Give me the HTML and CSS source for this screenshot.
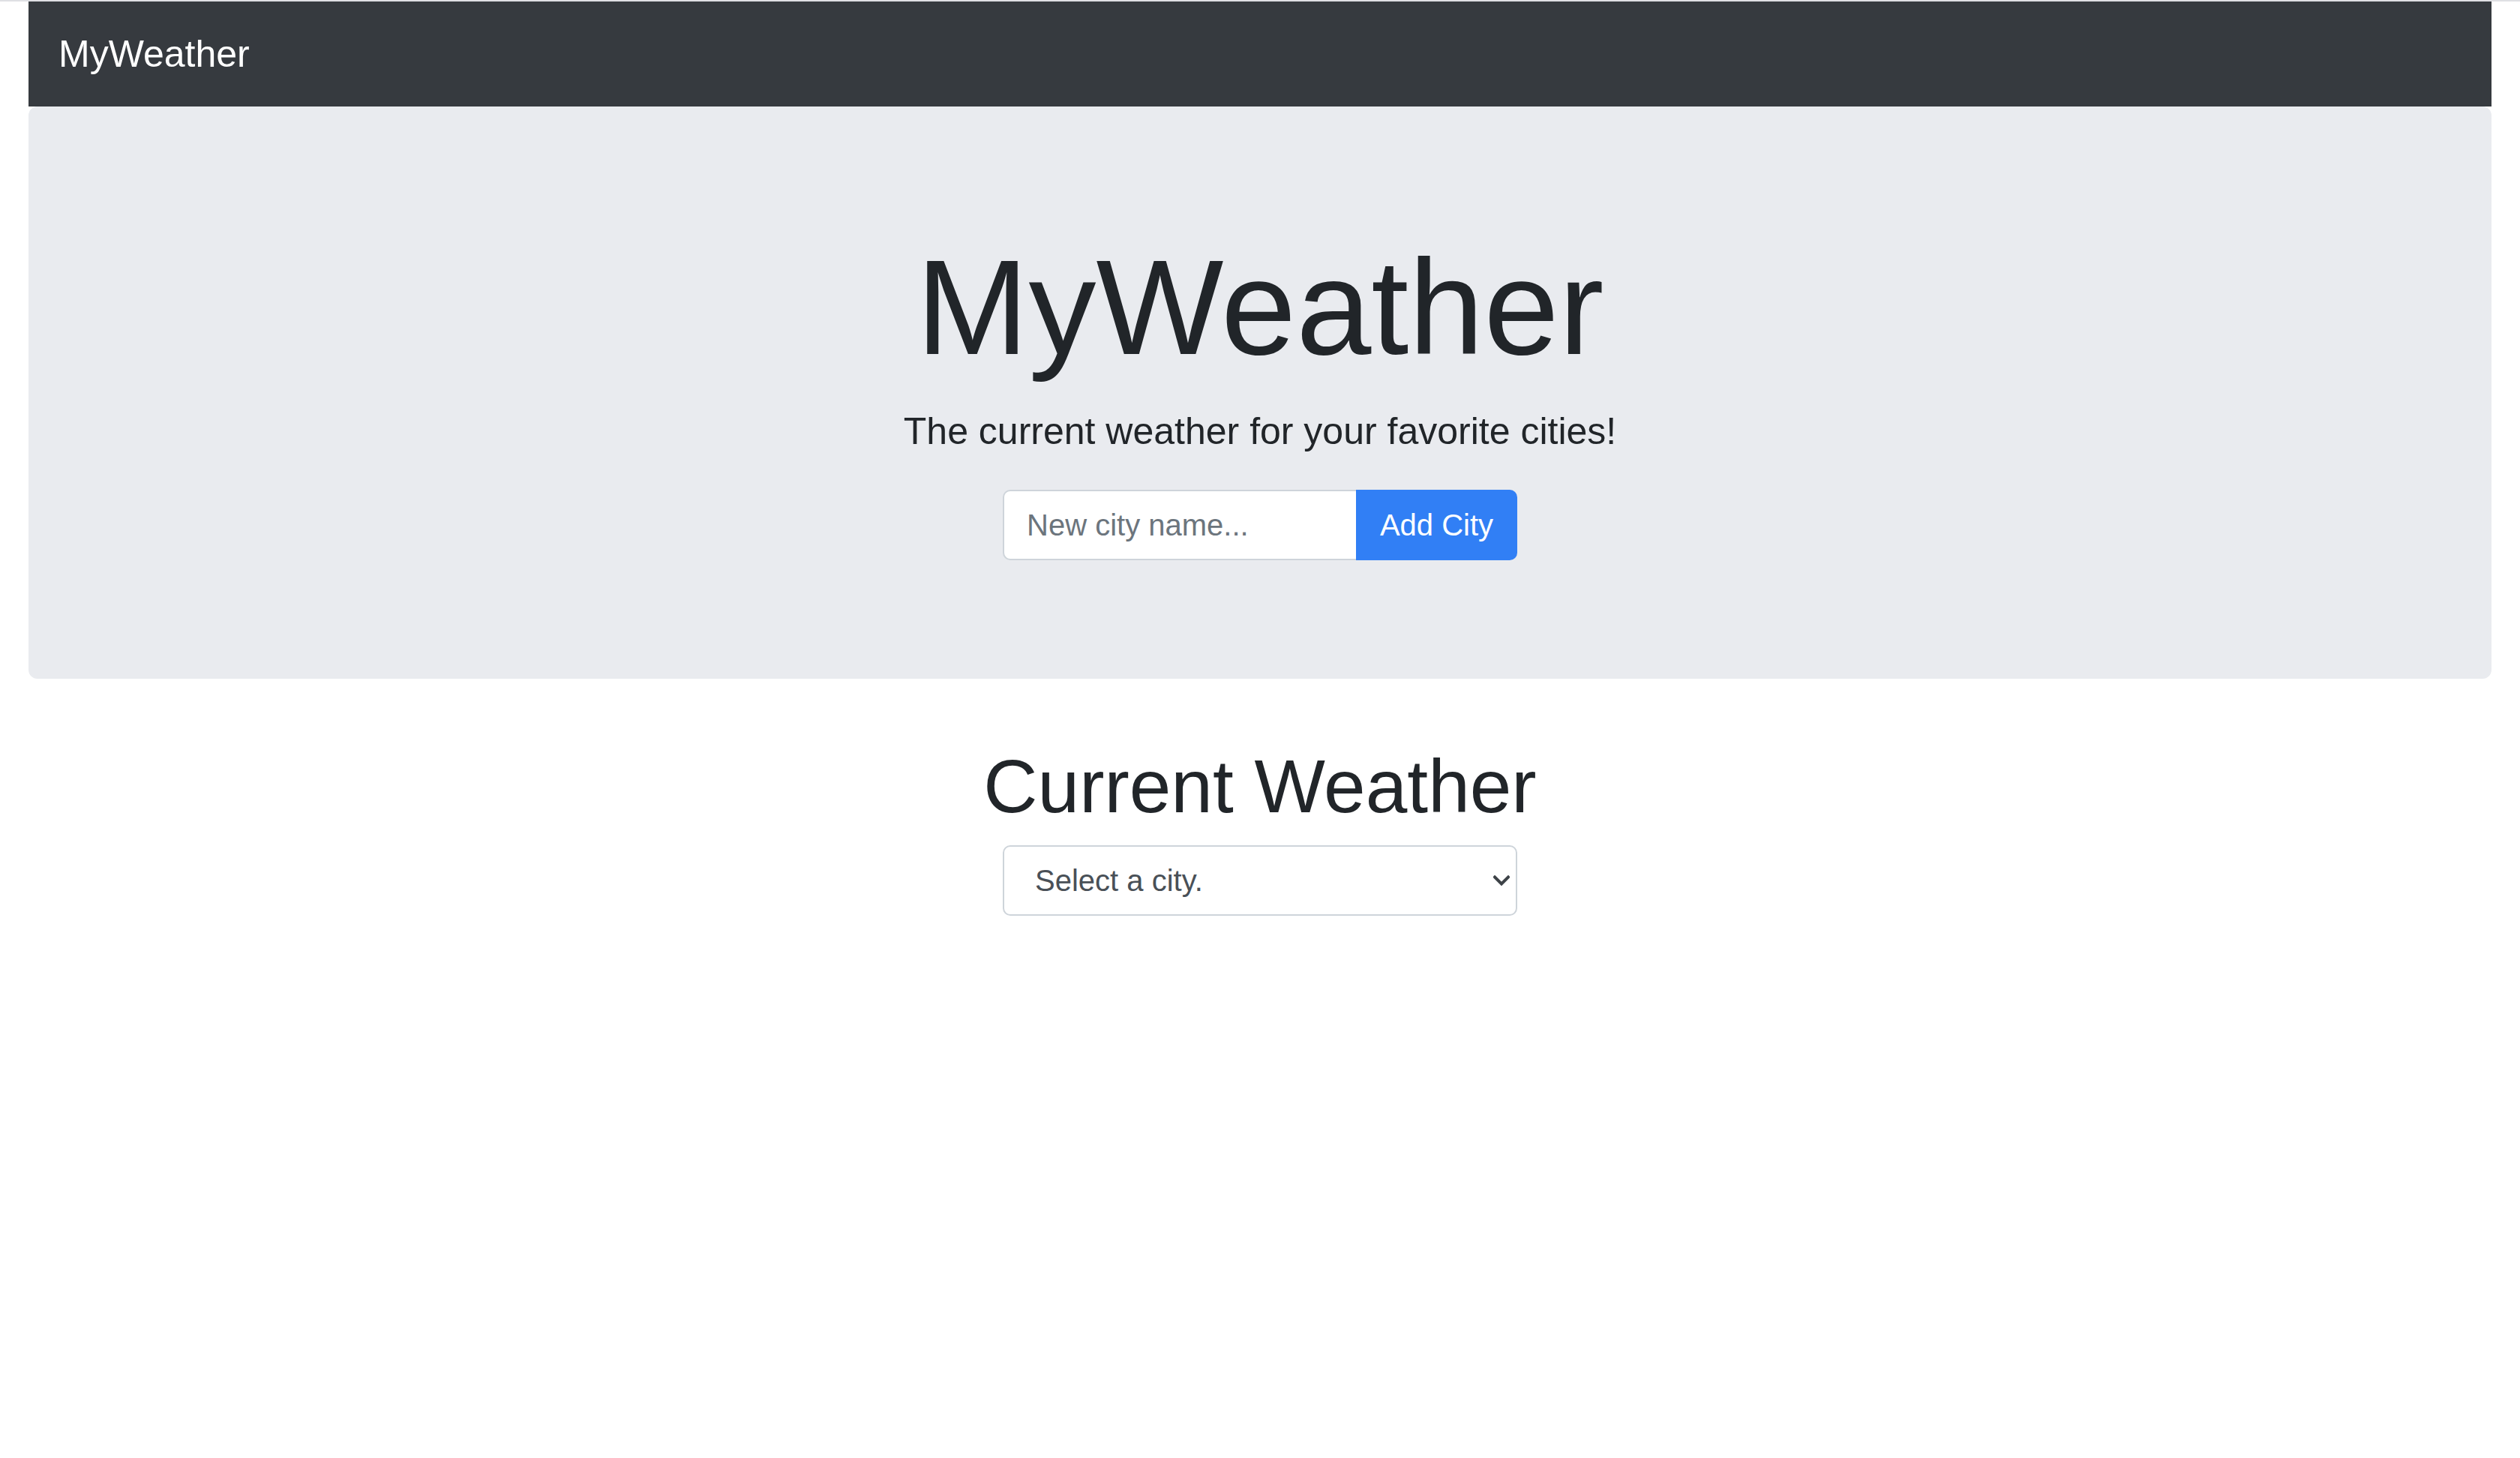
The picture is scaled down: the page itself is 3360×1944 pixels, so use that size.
FILE: index.html
```html
<!DOCTYPE html>
<html lang="en">
<head>
<meta charset="utf-8">
<title>MyWeather</title>
<link rel="stylesheet" href="styles.css">
</head>
<body>
<div class="topline"></div>
<div class="page">
  <nav class="navbar">
    <a class="brand" href="#">MyWeather</a>
  </nav>
  <header class="jumbotron">
    <h1 class="display">MyWeather</h1>
    <p class="lead">The current weather for your favorite cities!</p>
    <form class="input-group">
      <input class="city-input" type="text" placeholder="New city name...">
      <button class="btn-add" type="button">Add City</button>
    </form>
  </header>
  <section class="current">
    <h1 class="section-title">Current Weather</h1>
    <div class="select-wrap">
      <select class="city-select">
        <option>Select a city.</option>
      </select>
      <svg class="chevron" width="22" height="15" viewBox="0 0 22 15" aria-hidden="true">
        <polyline points="2,2.5 11,11.5 20,2.5" fill="none" stroke="#3d4247" stroke-width="4" stroke-linecap="square" stroke-linejoin="miter"/>
      </svg>
    </div>
  </section>
</div>
</body>
</html>
```

FILE: styles.css
```css
* {
  box-sizing: border-box;
}

html, body {
  margin: 0;
  padding: 0;
  background: #ffffff;
}

body {
  font-family: "Liberation Sans", Arial, Helvetica, sans-serif;
  color: #212529;
}

.topline {
  height: 2px;
  background: #dfe0e4;
}

.page {
  padding: 0 38px;
}

.navbar {
  background: #363a3f;
  padding: 20px 40px;
  height: 140px;
}

.brand {
  display: inline-block;
  padding: 12.5px 0;
  font-size: 50px;
  line-height: 75px;
  color: #ffffff;
  text-decoration: none;
}

.jumbotron {
  background: #e9ebef;
  border-radius: 12px;
  padding: 160px 80px 158px;
  margin-bottom: 83px;
  text-align: center;
}

.display {
  font-size: 180px;
  font-weight: 300;
  line-height: 1.2;
  margin: 0 0 20px;
  color: #212529;
}

.lead {
  font-size: 50px;
  font-weight: 300;
  line-height: 1.5;
  margin: 0 0 40px;
}

.input-group {
  display: flex;
  justify-content: center;
  margin: 0;
}

.city-input {
  width: 471px;
  height: 94px;
  border: 2px solid #ced4da;
  border-right: none;
  border-radius: 10px 0 0 10px;
  padding: 0 30px;
  font-family: "Liberation Sans", Arial, sans-serif;
  font-size: 40px;
  color: #495057;
  background: #ffffff;
  outline: none;
}

.city-input::placeholder {
  color: #6c757d;
}

.btn-add {
  width: 215px;
  height: 94px;
  border: none;
  border-radius: 0 10px 10px 0;
  background: #317ff5;
  color: #ffffff;
  font-family: "Liberation Sans", Arial, sans-serif;
  font-size: 40px;
  padding: 0 30px;
  cursor: pointer;
}

.current {
  display: flex;
  flex-direction: column;
  align-items: center;
}

.section-title {
  font-size: 100px;
  font-weight: 400;
  line-height: 1.2;
  margin: 0 0 19px;
  color: #212529;
}

.select-wrap {
  position: relative;
  width: 686px;
}

.city-select {
  appearance: none;
  -webkit-appearance: none;
  display: block;
  width: 686px;
  height: 94px;
  border: 2px solid #ced4da;
  border-radius: 10px;
  background: #ffffff;
  padding: 0 60px 0 41px;
  font-family: "Liberation Sans", Arial, sans-serif;
  font-size: 40px;
  color: #495057;
  outline: none;
}

.chevron {
  position: absolute;
  right: 10px;
  top: 40px;
  pointer-events: none;
}
```
